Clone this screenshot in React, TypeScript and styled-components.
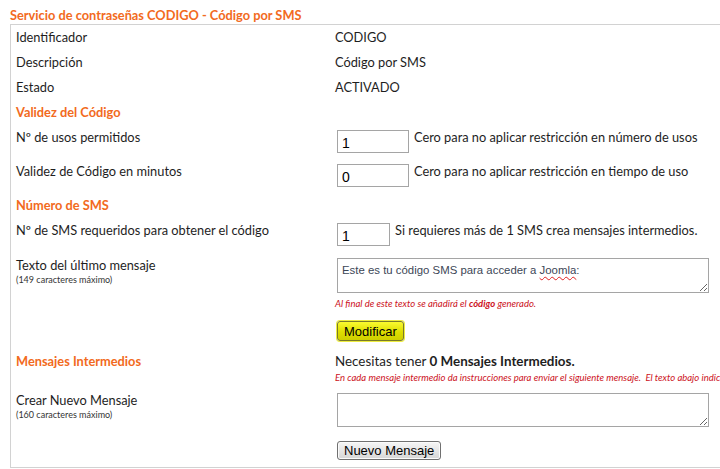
import React from 'react'
import styled, { createGlobalStyle } from 'styled-components'

const GlobalStyle = createGlobalStyle`
  html, body {
    margin: 0;
    padding: 0;
    background: #ffffff;
    overflow: hidden;
  }
  body {
    font-family: Lato, "Open Sans", sans-serif;
    font-size: 12.8px;
    color: #1e1e1e;
  }
`

const ORANGE = '#f26a21'
const NOTE_RED = '#cc1122'

const Page = styled.div`
  width: 820px;
  padding: 6px 0 0 10px;
`

const Title = styled.h2`
  margin: 0;
  font-size: 12.8px;
  line-height: 18px;
  font-weight: bold;
  color: ${ORANGE};
`

const Box = styled.div`
  border-top: 1px solid #d2d2d2;
  border-left: 1px solid #d2d2d2;
  border-bottom: 1px solid #d2d2d2;
  padding: 0 0 0 5px;
`

const Row = styled.div<{ $h?: number; $pt?: number }>`
  display: grid;
  grid-template-columns: 319px 1fr;
  align-items: start;
  box-sizing: border-box;
  ${(p) => (p.$h ? `height: ${p.$h}px;` : '')}
  padding-top: ${(p) => p.$pt ?? 0}px;
`

const Label = styled.div`
  line-height: 15px;
`

const InfoText = styled.div`
  line-height: 25px;
`

const Section = styled.div`
  font-weight: bold;
  color: ${ORANGE};
  line-height: 25px;
`

const SectionTall = styled(Section)`
  line-height: 18px;
`

const Small = styled.div`
  font-size: 9px;
  line-height: 14px;
  color: #333;
`

const Cell = styled.div`
  display: flex;
  flex-direction: column;
  align-items: flex-start;
`

const Inline = styled.div`
  display: flex;
  align-items: flex-start;
  gap: 5px;
  padding-left: 2px;
`

const Hint = styled.span`
  line-height: 15px;
  white-space: nowrap;
`

const NumInput = styled.input<{ $w: number }>`
  box-sizing: border-box;
  width: ${(p) => p.$w}px;
  height: 23px;
  margin: 0;
  padding: 3px 4px 0;
  border: 1px solid #a5a5a5;
  font-family: "Liberation Sans", Arial, sans-serif;
  font-size: 14px;
  color: #000;
  background: #fff;
  outline: none;
`

const TextBox = styled.div<{ $h: number }>`
  box-sizing: border-box;
  width: 372px;
  height: ${(p) => p.$h}px;
  margin-left: 2px;
  padding: 4px 4px 3px;
  border: 1px solid #a5a5a5;
  font-family: "Liberation Sans", Arial, sans-serif;
  font-size: 11.4px;
  line-height: 15px;
  color: #3c4656;
  background: #fff;
  resize: vertical;
  overflow: auto;
  outline: none;
`

const Misspelled = styled.span`
  text-decoration: underline wavy #e02020;
  text-decoration-thickness: 1px;
  text-underline-offset: 2px;
`

const Note = styled.div<{ $mt: number }>`
  margin-top: ${(p) => p.$mt}px;
  font-size: 9.5px;
  line-height: 12px;
  font-style: italic;
  color: ${NOTE_RED};
  white-space: nowrap;

  b {
    font-weight: bold;
  }
`

const Strong = styled.div`
  font-size: 13.4px;
  line-height: 18px;

  b {
    font-weight: bold;
  }
`

const Button = styled.button<{ $yellow?: boolean; $mt: number }>`
  margin: ${(p) => p.$mt}px 0 0 2px;
  height: ${(p) => (p.$yellow ? 20 : 19)}px;
  padding: 0 6px;
  font-family: "Liberation Sans", Arial, sans-serif;
  font-size: 13px;
  color: #000;
  border-radius: 3px;
  cursor: pointer;
  border: 1px solid ${(p) => (p.$yellow ? '#7a7a2a' : '#707070')};
  background: ${(p) =>
    p.$yellow
      ? 'linear-gradient(#fafa30, #dede00 55%, #cfcf00)'
      : 'linear-gradient(#f6f6f6, #e6e6e6 50%, #d6d6d6)'};
  box-shadow: ${(p) =>
    p.$yellow ? '0 0 0 1px #eded40' : 'inset 0 0 0 1px #fbfbfb'};
`

export default function App() {
  return (
    <Page>
      <GlobalStyle />
      <Title>Servicio de contraseñas CODIGO - Código por SMS</Title>
      <Box>
        <Row $h={25}>
          <InfoText>Identificador</InfoText>
          <InfoText>CODIGO</InfoText>
        </Row>
        <Row $h={25}>
          <InfoText>Descripción</InfoText>
          <InfoText>Código por SMS</InfoText>
        </Row>
        <Row $h={25}>
          <InfoText>Estado</InfoText>
          <InfoText>ACTIVADO</InfoText>
        </Row>
        <Row $h={25}>
          <Section>Validez del Código</Section>
        </Row>
        <Row $h={34} $pt={5}>
          <Label>Nº de usos permitidos</Label>
          <Inline>
            <NumInput $w={72} defaultValue="1" />
            <Hint>Cero para no aplicar restricción en número de usos</Hint>
          </Inline>
        </Row>
        <Row $h={34} $pt={5}>
          <Label>Validez de Código en minutos</Label>
          <Inline>
            <NumInput $w={72} defaultValue="0" />
            <Hint>Cero para no aplicar restricción en tiempo de uso</Hint>
          </Inline>
        </Row>
        <Row $h={25}>
          <Section>Número de SMS</Section>
        </Row>
        <Row $h={35} $pt={5}>
          <Label>Nº de SMS requeridos para obtener el código</Label>
          <Inline>
            <NumInput $w={53} defaultValue="1" />
            <Hint>Si requieres más de 1 SMS crea mensajes intermedios.</Hint>
          </Inline>
        </Row>
        <Row $h={94} $pt={5}>
          <div>
            <Label>Texto del último mensaje</Label>
            <Small>(149 caracteres máximo)</Small>
          </div>
          <Cell>
            <TextBox $h={35} contentEditable suppressContentEditableWarning>
              Este es tu código SMS para acceder a <Misspelled>Joomla</Misspelled>:
            </TextBox>
            <Note $mt={5}>
              Al final de este texto se añadirá el <b>código</b> generado.
            </Note>
            <Button $yellow $mt={11}>
              Modificar
            </Button>
          </Cell>
        </Row>
        <Row $h={41} $pt={5}>
          <SectionTall>Mensajes Intermedios</SectionTall>
          <Cell>
            <Strong>
              Necesitas tener <b>0 Mensajes Intermedios.</b>
            </Strong>
            <Note $mt={2}>
              En cada mensaje intermedio da instrucciones para enviar el siguiente
              mensaje.&nbsp; El texto abajo indicado se enviará como mensaje intermedio.
            </Note>
          </Cell>
        </Row>
        <Row $pt={5}>
          <div>
            <Label>Crear Nuevo Mensaje</Label>
            <Small>(160 caracteres máximo)</Small>
          </div>
          <Cell>
            <TextBox $h={34} contentEditable suppressContentEditableWarning />
            <Button $mt={14}>Nuevo Mensaje</Button>
            <div style={{ height: 7 }} />
          </Cell>
        </Row>
      </Box>
    </Page>
  )
}
